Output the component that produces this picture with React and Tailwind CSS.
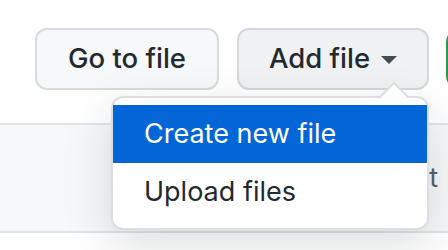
export default function App() {
  const font = { fontFamily: "Inter, 'Liberation Sans', sans-serif" };
  return (
    <div className="relative w-[448px] h-[250px] overflow-hidden bg-white text-[#24292e]" style={font}>
      <div className="flex items-center pt-[28px] pl-[35px]">
        <button className="flex h-[62px] w-[184px] shrink-0 items-center justify-center rounded-[12px] border-2 border-[#d9dbde] bg-[#f6f8fa] text-[27.5px] font-medium leading-none text-[#24292e]">
          Go to file
        </button>
        <button className="ml-[18px] flex h-[62px] w-[192px] shrink-0 items-center justify-center gap-[11px] rounded-[12px] border-2 border-[#d5d7da] bg-[#f0f1f3] text-[27.5px] font-medium leading-none text-[#24292e]">
          <span>Add file</span>
          <svg width="16" height="8" viewBox="0 0 16 8" className="mt-[2px]">
            <path d="M0 0 L16 0 L8 8 Z" fill="#444d56" />
          </svg>
        </button>
        <div className="ml-[17px] h-[58px] w-[100px] shrink-0 rounded-[12px] border-2 border-[#2c974b] bg-[#2ea44f]" />
      </div>
      <div className="mt-[33px] flex h-[110px] items-center justify-end border-y-2 border-[#e1e4e8] bg-[#f6f8fa] pr-[10px]">
        <span className="text-[27px] text-[#586069]">Latest commit</span>
      </div>

      <div className="absolute left-[111px] top-[96px] w-[318px] rounded-[12px] border-2 border-[#dcdee1] bg-white py-[7px] shadow-[0_16px_48px_rgba(27,31,35,0.15)]">
        <div className="flex h-[58px] items-center bg-[#0366d6] pl-[31px] text-[27px] text-white">Create new file</div>
        <div className="flex h-[58px] items-center pl-[31px] text-[27px] text-[#24292e]">Upload files</div>
      </div>
      <svg className="absolute left-[378px] top-[81px]" width="32" height="18" viewBox="0 0 32 18">
        <path d="M0 18 L16 2 L32 18 Z" fill="#ffffff" />
        <path d="M1 17 L16 2 L31 17" fill="none" stroke="#dcdee1" strokeWidth="2" />
      </svg>
    </div>
  );
}
